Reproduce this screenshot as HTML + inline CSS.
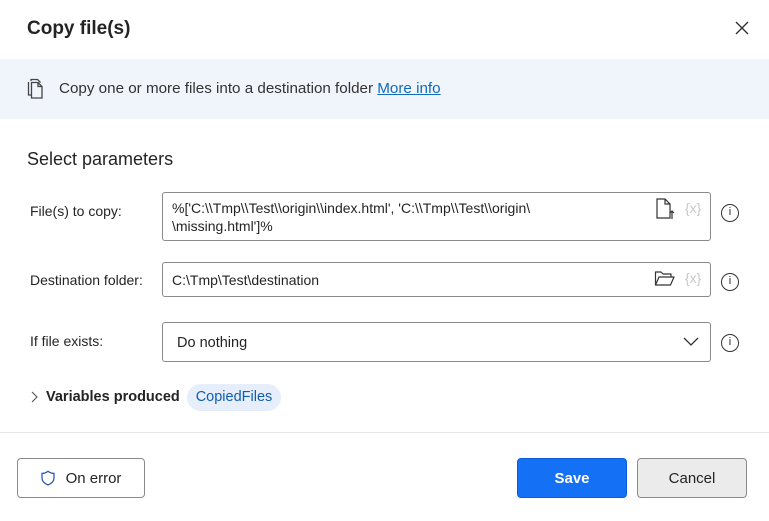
<!DOCTYPE html>
<html><head><style>
*{box-sizing:border-box;margin:0;padding:0}
body{width:769px;height:521px;background:#fff;font-family:"Liberation Sans",sans-serif;color:#242424;position:relative;overflow:hidden;font-size:14px}
.abs{position:absolute}
.inp{position:absolute;left:162px;width:549px;border:1px solid #8a8a8a;border-radius:3px;background:#fff}
.lbl{position:absolute;left:30px;font-size:14px}
.info{position:absolute;left:721px;width:18px;height:18px;border:1.3px solid #333;border-radius:50%;font-size:11px;text-align:center;line-height:15px}
.fx{position:absolute;color:#c8c8c8;font-size:14px}
.btn{position:absolute;top:458px;height:40px;border-radius:4px;font-size:15px;font-weight:bold;display:flex;align-items:center;justify-content:center}
</style></head><body>
<div class="abs" style="left:27px;top:18px;font-size:19px;font-weight:bold;color:#242424">Copy file(s)</div>
<svg class="abs" style="left:735px;top:21px" width="14" height="14" viewBox="0 0 14 14"><path d="M1 1L13 13M13 1L1 13" stroke="#333" stroke-width="1.4"/></svg>
<div class="abs" style="left:0;top:59px;width:769px;height:60px;background:#f0f4fb"></div>
<svg class="abs" style="left:27px;top:78px" width="20" height="22" viewBox="0 0 20 22"><path d="M4 3V1.5H10.5L13.5 4.5" fill="none" stroke="#444" stroke-width="1.3"/><path d="M1.5 4V17H4.5" fill="none" stroke="#444" stroke-width="1.3"/><path d="M4.5 4.5H11L15 8.5V20H4.5Z M11 4.5V8.5H15" fill="none" stroke="#444" stroke-width="1.3"/></svg>
<div class="abs" style="left:59px;top:80px;font-size:15.2px;color:#333">Copy one or more files into a destination folder <span style="color:#0f6cbd;text-decoration:underline">More info</span></div>
<div class="abs" style="left:27px;top:149px;font-size:18px;color:#242424">Select parameters</div>

<div class="lbl" style="top:203px">File(s) to copy:</div>
<div class="inp" style="top:192px;height:49px"></div>
<div class="abs" style="left:172px;top:199px;font-size:14px;line-height:18px;color:#242424">%['C:\\Tmp\\Test\\origin\\index.html', 'C:\\Tmp\\Test\\origin\<br>\missing.html']%</div>
<svg class="abs" style="left:655px;top:198px" width="20" height="22" viewBox="0 0 20 22"><path d="M2 1H10L15 6V20H2Z M10 1V6H15" fill="none" stroke="#333" stroke-width="1.2"/><path d="M17 21V13M15 15L17 13L19 15" fill="none" stroke="#333" stroke-width="1.2"/></svg>
<div class="fx" style="left:685px;top:200px">{x}</div>
<div class="info" style="top:204px">i</div>

<div class="lbl" style="top:272px">Destination folder:</div>
<div class="inp" style="top:262px;height:35px"></div>
<div class="abs" style="left:172px;top:272px">C:\Tmp\Test\destination</div>
<svg class="abs" style="left:654px;top:270px" width="22" height="18" viewBox="0 0 22 18"><path d="M1.5 15V2H7L9 4H17V7 M1.5 15L5 7H20L16.5 15Z" fill="none" stroke="#333" stroke-width="1.2" stroke-linejoin="round"/></svg>
<div class="fx" style="left:685px;top:270px">{x}</div>
<div class="info" style="top:273px">i</div>

<div class="lbl" style="top:333px">If file exists:</div>
<div class="inp" style="top:322px;height:40px"></div>
<div class="abs" style="left:177px;top:335px;font-size:14.5px">Do nothing</div>
<svg class="abs" style="left:683px;top:337px" width="16" height="10" viewBox="0 0 16 10"><path d="M1 1L8 8L15 1" fill="none" stroke="#333" stroke-width="1.3"/></svg>
<div class="info" style="top:334px">i</div>

<svg class="abs" style="left:31px;top:391px" width="7" height="12" viewBox="0 0 7 12"><path d="M1 1L6 6L1 11" fill="none" stroke="#555" stroke-width="1.1"/></svg>
<div class="abs" style="left:46px;top:389px;font-size:14.5px;font-weight:bold">Variables produced</div>
<div class="abs" style="left:187px;top:384px;width:94px;height:27px;border-radius:14px;background:#e6eefb;color:#0f5cb0;font-size:14.5px;text-align:center;line-height:27px">CopiedFiles</div>

<div class="abs" style="left:0;top:432px;width:769px;height:1px;background:#e6e6e6"></div>
<div class="btn" style="left:17px;width:128px;border:1px solid #8a8a8a;background:#fff;font-weight:normal;color:#242424">
<svg width="14" height="16" viewBox="0 0 14 16" style="margin-right:11px"><path d="M7 1.2C5 2.8 3 3.4 1 3.4V8C1 11.5 4 13.8 7 15C10 13.8 13 11.5 13 8V3.4C11 3.4 9 2.8 7 1.2Z" fill="none" stroke="#2c5fb0" stroke-width="1.3"/></svg>On error</div>
<div class="btn" style="left:517px;width:110px;background:#1470f5;color:#fff;border:1px solid #0a5fd8">Save</div>
<div class="btn" style="left:637px;width:110px;background:#ebebeb;border:1px solid #8a8a8a;color:#242424;font-weight:normal">Cancel</div>
</body></html>
